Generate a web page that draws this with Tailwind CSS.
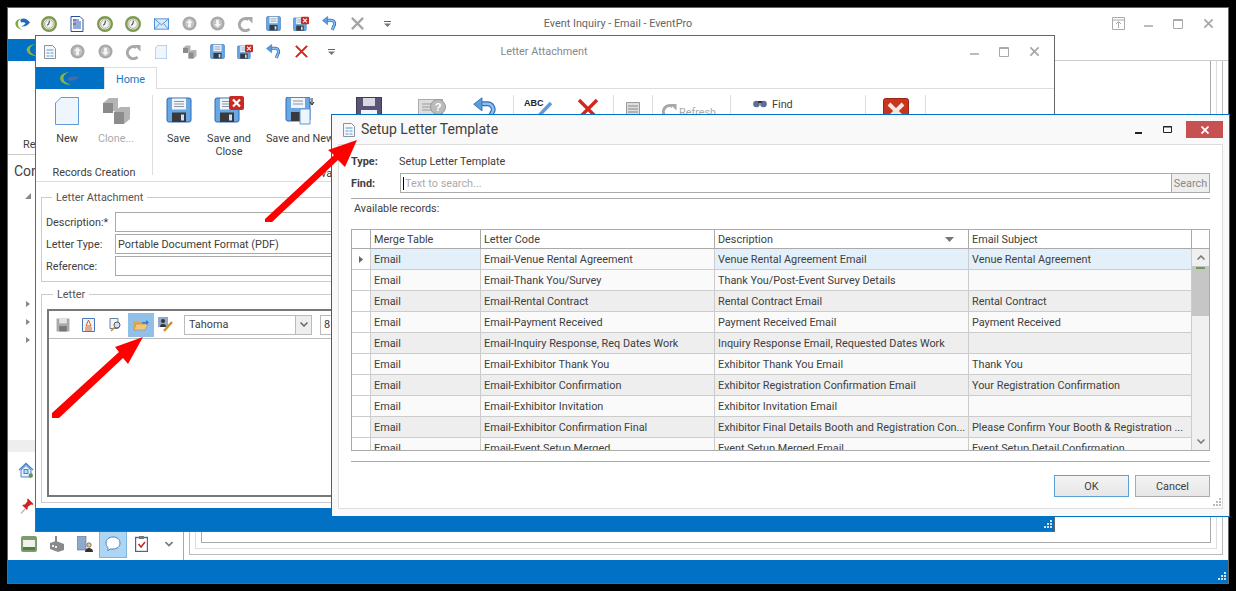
<!DOCTYPE html>
<html>
<head>
<meta charset="utf-8">
<script src="https://cdn.jsdelivr.net/npm/@tailwindcss/browser@4"></script>
</head>
<body class="m-0 overflow-hidden bg-black">
<svg class="hidden" xmlns="http://www.w3.org/2000/svg">
  <symbol id="clock" viewBox="0 0 16 16"><circle cx="8" cy="8" r="6.800" fill="#e8ecdc" stroke="#7f9a50" stroke-width="2.400"/><circle cx="8" cy="8" r="4.300" fill="#f2f2f2" stroke="#8a8a80" stroke-width=".6"/><path d="M8.500 4.800 7.600 8.400 6 9.200" fill="none" stroke="#333" stroke-width="1"/></symbol>
  <symbol id="doc" viewBox="0 0 14 16"><path d="M1 .5h9l3 3v12H1z" fill="#fff" stroke="#2a4f9a"/><path d="M3 4h6M3 6h8M3 8h8M3 10h8M3 12h8" stroke="#2458b8"/><path d="M3 4h3M3 8h3" stroke="#c03030"/></symbol>
  <symbol id="mail" viewBox="0 0 16 12"><rect x=".5" y=".5" width="15" height="11" fill="#dbeafa" stroke="#4d8fd0"/><path d="M.5 .5 8 7l7.500-6.500M.5 11.500 6 5.500M15.500 11.500 10 5.500" fill="none" stroke="#4d8fd0"/></symbol>
  <symbol id="up" viewBox="0 0 16 16"><circle cx="8" cy="8" r="7.500" fill="#a9a9a9"/><circle cx="8" cy="8" r="5" fill="#c4c4c4"/><path d="M8 3.500 11.500 7.500H9.500V12h-3V7.500h-2z" fill="#f4f4f4"/></symbol>
  <symbol id="down" viewBox="0 0 16 16"><circle cx="8" cy="8" r="7.500" fill="#a9a9a9"/><circle cx="8" cy="8" r="5" fill="#c4c4c4"/><path d="M8 12.500 11.500 8.500H9.500V4h-3v4.500h-2z" fill="#f4f4f4"/></symbol>
  <symbol id="refresh" viewBox="0 0 16 16"><path d="M12.500 13A6 6 0 1 1 11.500 3.500" fill="none" stroke="#a8a8a8" stroke-width="3"/><path d="M9 1h6.500v6.500z" fill="#a8a8a8"/></symbol>
  <symbol id="disk" viewBox="0 0 26 26"><path d="M1 3a2 2 0 0 1 2-2h20a2 2 0 0 1 2 2v20a2 2 0 0 1-2 2H3a2 2 0 0 1-2-2z" fill="#6aa8e4" stroke="#2a68b0"/><rect x="6" y="1.500" width="14" height="11" fill="#f1f4f8"/><path d="M8 4.500h10M8 7h10M8 9.500h10" stroke="#8a95a3"/><rect x="6" y="15.500" width="14" height="9.500" fill="#3a3a3e"/><rect x="15" y="17.500" width="3" height="6" fill="#cfe0f2"/></symbol>
  <symbol id="diskx" viewBox="0 0 30 27"><use href="#disk" x="0" y="1" width="26" height="26"/><rect x="15" y="0" width="15" height="14" rx="2" fill="#c62a20"/><path d="M19 3.500l7 7M26 3.500l-7 7" stroke="#fff" stroke-width="2.200"/></symbol>
  <symbol id="undo" viewBox="0 0 16 16"><path d="M4 4.500H9.500a3.800 3.800 0 0 1 3 6.300L11 15" fill="none" stroke="#2f6fb8" stroke-width="3.200"/><path d="M4 4.500H9.500a3.800 3.800 0 0 1 3 6.300L11 15" fill="none" stroke="#8cc0f0" stroke-width="1.600"/><path d="M6 .5v8.800L.5 4.800z" fill="#5c9cdc" stroke="#2f6fb8" stroke-width=".6"/></symbol>
  <symbol id="xgray" viewBox="0 0 16 16"><path d="M2 2l12 12M14 2 2 14" stroke="#a5a5a5" stroke-width="2.400"/></symbol>
  <symbol id="xred" viewBox="0 0 16 16"><path d="M2 2l12 12M14 2 2 14" stroke="#d3261c" stroke-width="2.200"/></symbol>
  <symbol id="drop" viewBox="0 0 7 6"><path d="M0 .5h7" stroke="#666"/><path d="M0 2.500h7L3.500 6z" fill="#777"/></symbol>
  <symbol id="newdoc" viewBox="0 0 24 28"><path d="M6 .5h17.500v27H.5V6z" fill="#eef5fc" stroke="#5c9ad8"/></symbol>
  <symbol id="clone" viewBox="0 0 30 28"><path d="M2 6l6-5h9v13H2z" fill="#b4b4b4"/><path d="M13 15l6-5h10v12l-6 5H13z" fill="#b4b4b4"/><path d="M13 15h10v12H13z" fill="#8c8c8c"/><path d="M2 6h10v10H2z" fill="#8a8a8a"/></symbol>
  <symbol id="list" viewBox="0 0 12 14"><path d="M.5 .5h8l3 3v10H.5z" fill="#f6f8fb" stroke="#8a929c"/><path d="M2.500 4h7v2h-7zM2.500 7h3v2h-3zM6.500 7h3v2h-3zM2.500 10h3v2h-3zM6.500 10h3v2h-3z" fill="#a8c8e8"/></symbol>
  <symbol id="logo" viewBox="0 0 16 14"><path d="M7 1.500C2.500 2.500 1 5 1.500 7.500 2 10.500 5 12 8.500 13 5 11 3.800 9 4 6.500 4.100 4.500 5 3 7 1.500z" fill="#7fa83c"/><path d="M7 2c3-1.200 6-.5 9 3.500-2 2.500-5 4.500-9 4 2.500-.7 4-2 4.500-3.500-1-.7-2.500-1-4.500-.5-.6-1.500-.6-2.500 0-3.500z" fill="#1b6cc0"/></symbol>
  <symbol id="logob" viewBox="0 0 22 16"><path d="M10 1C3 2 0 5 .5 8.500 1 12 5 14.500 12 15 7 13 4 11 4 7.500 4 5 6 2.500 10 1z" fill="#8fb33c"/><path d="M9 7c3-1 7-1.500 12-1-2 2-5 4-8 4.500-1 .1-3 0-4-1z" fill="#4a6aa8"/></symbol>
  <symbol id="grip" viewBox="0 0 9 9"><path d="M7 0h2v2H7zM4 3h2v2H4zM7 3h2v2H7zM1 6h2v2H1zM4 6h2v2H4zM7 6h2v2H7z" fill="currentColor"/></symbol>
</svg>

<!-- Main window -->
<div class="absolute left-[7px] top-[7px] flex h-[577px] w-[1222px] flex-col border border-[#666] bg-white font-['Roboto',sans-serif] text-[10.85px] leading-[13px] text-[#404040]">
  <div class="relative flex h-[31px] shrink-0 items-center">
    <div class="flex w-[27px] justify-center"><svg class="h-[14px] w-[16px]"><use href="#logo"/></svg></div>
    <div class="flex w-[28px] justify-center"><svg class="size-[16px]"><use href="#clock"/></svg></div>
    <div class="flex w-[28px] justify-center"><svg class="h-[16px] w-[14px]"><use href="#doc"/></svg></div>
    <div class="flex w-[28px] justify-center"><svg class="size-[16px]"><use href="#clock"/></svg></div>
    <div class="flex w-[28px] justify-center"><svg class="size-[16px]"><use href="#clock"/></svg></div>
    <div class="flex w-[28px] justify-center"><svg class="h-[12px] w-[15px]"><use href="#mail"/></svg></div>
    <div class="flex w-[28px] justify-center"><svg class="size-[15px]"><use href="#up"/></svg></div>
    <div class="flex w-[28px] justify-center"><svg class="size-[15px]"><use href="#down"/></svg></div>
    <div class="flex w-[28px] justify-center"><svg class="size-[16px]"><use href="#refresh"/></svg></div>
    <div class="flex w-[28px] justify-center"><svg class="size-[15px]"><use href="#disk"/></svg></div>
    <div class="flex w-[28px] justify-center"><svg class="h-[16px] w-[16px]"><use href="#diskx"/></svg></div>
    <div class="flex w-[28px] justify-center"><svg class="size-[15px]"><use href="#undo"/></svg></div>
    <div class="flex w-[28px] justify-center"><svg class="size-[15px]"><use href="#xgray"/></svg></div>
    <div class="flex w-[32px] justify-center"><svg class="h-[6px] w-[7px]"><use href="#drop"/></svg></div>
    <div class="absolute left-[400px] w-[420px] text-center text-[#666]">Event Inquiry - Email - EventPro</div>
    <div class="ml-auto flex items-center">
      <div class="flex w-[30px] justify-center"><svg class="size-[13px]" viewBox="0 0 13 13"><path d="M.5 .5h12v12H.5zM.5 3h12M6.500 11V5M4 7l2.500-2.500L9 7" fill="none" stroke="#aaa"/></svg></div>
      <div class="flex w-[30px] justify-center"><svg class="h-[13px] w-[9px]" viewBox="0 0 9 13"><path d="M0 9h9" stroke="#bbb" stroke-width="2"/></svg></div>
      <div class="flex w-[30px] justify-center"><svg class="size-[10px]" viewBox="0 0 10 10"><path d="M.5 .5h9v9h-9zM.5 1.500h9" fill="none" stroke="#aaa"/></svg></div>
      <div class="flex w-[30px] justify-center"><svg class="size-[11px]"><use href="#xgray"/></svg></div>
      <div class="w-[5px]"></div>
    </div>
  </div>
  <div class="flex h-[22px] shrink-0 border-b border-[#ccc]">
    <div class="flex h-[22px] w-[68px] items-center justify-end bg-[#0071c5] pr-[30px]"><svg class="h-[14px] w-[20px]"><use href="#logob"/></svg></div>
  </div>
  <div class="flex min-h-0 flex-1">
    <div class="flex w-[176px] shrink-0 flex-col border-r border-[#aaa]">
      <div class="mt-[77px] pl-[15px]">Re</div>
      <div class="mt-[3px] border-b border-[#ccc]"></div>
      <div class="mt-[7px] pl-[6px] text-[14px] leading-[18px]">Con</div>
      <div class="mt-[13px] pl-[17px]"><svg class="size-[6px]" viewBox="0 0 6 6"><path d="M6 0v6H0z" fill="#888"/></svg></div>
      <div class="mt-[102px] flex flex-col gap-[12px] pl-[18px]">
        <svg class="h-[6px] w-[4px]" viewBox="0 0 4 6"><path d="M0 0l4 3-4 3z" fill="#888"/></svg>
        <svg class="h-[6px] w-[4px]" viewBox="0 0 4 6"><path d="M0 0l4 3-4 3z" fill="#888"/></svg>
        <svg class="h-[6px] w-[4px]" viewBox="0 0 4 6"><path d="M0 0l4 3-4 3z" fill="#888"/></svg>
      </div>
      <div class="mt-[97px] h-[12px] bg-[#eee]"></div>
      <div class="mt-[10px] pl-[10px]"><svg class="h-[16px] w-[16px]" viewBox="0 0 16 16"><path d="M8 .5 .5 7.500l1 1L8 2.800l6.500 5.700 1-1z" fill="#4d86cc"/><path d="M3 8v7h10V8L8 3.500z" fill="#e8f0f8" stroke="#4d86cc"/><rect x="6" y="7.500" width="4" height="4" fill="#bcd4ee" stroke="#4d86cc"/><circle cx="12.800" cy="13.500" r="2.200" fill="#5a9a50"/></svg></div>
      <div class="mt-[20px] pl-[12px]"><svg class="h-[16px] w-[14px]" viewBox="0 0 14 16"><path d="M5 11 1 15.500" stroke="#b5b5b5" stroke-width="1.200"/><path d="M8 .5c-1 .5-1 1.500-.5 2.500L5 6.500c-1-.3-2 0-2.800.8L7 12c.8-.8 1-2 .6-3l3.400-2.500c1 .5 2 .5 2.500-.5z" fill="#d4211d"/></svg></div>
      <div class="mb-[2px] mt-auto flex h-[28px] items-center pl-[7px]">
        <div class="flex w-[28px] justify-center"><svg class="size-[16px]" viewBox="0 0 16 16"><rect width="16" height="16" rx="2" fill="#7e9a6e"/><rect x="2" y="4" width="12" height="7" fill="#eef2ea"/><rect x="2" y="11" width="12" height="3" fill="#4f7f40"/></svg></div>
        <div class="flex w-[28px] justify-center"><svg class="size-[16px]" viewBox="0 0 16 16"><path d="M6 0h2v6H6z" fill="#888"/><path d="M1 7l6-2 8 3v6l-6 2-8-3z" fill="#8a8a8a"/><path d="M3 9h2v2H3zM6 10h2v2H6z" fill="#eee"/></svg></div>
        <div class="flex w-[28px] justify-center"><svg class="size-[16px]" viewBox="0 0 16 16"><path d="M0 0h9v14H0z" fill="#8ea9cc" stroke="#5a6f90" stroke-width=".6"/><circle cx="12" cy="9" r="2.200" fill="#e8c8a0" stroke="#333" stroke-width=".6"/><path d="M8 16c0-3 2-4 4-4s4 1 4 4z" fill="#333"/></svg></div>
        <div class="flex h-[28px] w-[28px] items-center justify-center border border-[#7db4e0] bg-[#aed5f2]"><svg class="size-[16px]" viewBox="0 0 16 16"><path d="M8 1c4 0 7 2.500 7 6s-3 6-7 6H5l-2 2V11.500C1.700 10.500 1 9 1 7c0-3.500 3-6 7-6z" fill="#fff" stroke="#4f7fc0"/></svg></div>
        <div class="flex w-[28px] justify-center"><svg class="h-[16px] w-[13px]" viewBox="0 0 13 16"><rect x=".5" y="1.500" width="12" height="14" fill="#fff" stroke="#3a68a8" stroke-width="1.400"/><rect x="4" y="0" width="5" height="3" fill="#777"/><path d="M3.500 8l2.500 3 4-5" fill="none" stroke="#c82a20" stroke-width="1.600"/></svg></div>
        <div class="flex w-[27px] justify-center"><svg class="h-[6px] w-[8px]" viewBox="0 0 8 6"><path d="M.5 1 4 4.500 7.500 1" fill="none" stroke="#777" stroke-width="1.600"/></svg></div>
      </div>
    </div>
    <div class="flex min-w-0 flex-1 pb-[5px] pl-[5px] pr-[5px]">
      <div class="flex flex-1 border border-t-0 border-[#bbb] px-[5px] pb-[5px]">
        <div class="flex flex-1 border border-t-0 border-[#ddd] px-[5px] pb-[5px]">
          <div class="flex-1 border border-t-0 border-[#aaa]"></div>
        </div>
      </div>
    </div>
  </div>
  <div class="flex h-[23px] shrink-0 items-end justify-end bg-[#0071c5] pb-[2px] pr-[2px] text-[#cfe3f5]"><svg class="size-[9px]"><use href="#grip"/></svg></div>
</div>

<!-- Letter Attachment window -->
<div class="absolute left-[35px] top-[35px] flex h-[497px] w-[1020px] flex-col border border-[#666] bg-white font-['Roboto',sans-serif] text-[10.85px] leading-[13px] text-[#404040]">
  <div class="relative flex h-[31px] shrink-0 items-center">
    <div class="flex w-[27px] justify-center"><svg class="h-[14px] w-[12px]"><use href="#list"/></svg></div>
    <div class="flex w-[28px] justify-center"><svg class="size-[15px]"><use href="#up"/></svg></div>
    <div class="flex w-[28px] justify-center"><svg class="size-[15px]"><use href="#down"/></svg></div>
    <div class="flex w-[28px] justify-center"><svg class="size-[16px]"><use href="#refresh"/></svg></div>
    <div class="flex w-[28px] justify-center"><svg class="h-[14px] w-[12px]"><use href="#newdoc"/></svg></div>
    <div class="flex w-[28px] justify-center"><svg class="h-[14px] w-[15px]"><use href="#clone"/></svg></div>
    <div class="flex w-[28px] justify-center"><svg class="size-[15px]"><use href="#disk"/></svg></div>
    <div class="flex w-[28px] justify-center"><svg class="h-[16px] w-[16px]"><use href="#diskx"/></svg></div>
    <div class="flex w-[28px] justify-center"><svg class="size-[15px]"><use href="#undo"/></svg></div>
    <div class="flex w-[28px] justify-center"><svg class="size-[15px]"><use href="#xred"/></svg></div>
    <div class="flex w-[32px] justify-center"><svg class="h-[6px] w-[7px]"><use href="#drop"/></svg></div>
    <div class="absolute left-[408px] w-[200px] text-center text-[#888]">Letter Attachment</div>
    <div class="ml-auto flex items-center pr-[5px]">
      <div class="flex w-[30px] justify-center"><svg class="h-[13px] w-[9px]" viewBox="0 0 9 13"><path d="M0 9h9" stroke="#bbb" stroke-width="2"/></svg></div>
      <div class="flex w-[30px] justify-center"><svg class="size-[10px]" viewBox="0 0 10 10"><path d="M.5 .5h9v9h-9zM.5 1.500h9" fill="none" stroke="#aaa"/></svg></div>
      <div class="flex w-[30px] justify-center"><svg class="size-[11px]"><use href="#xgray"/></svg></div>
    </div>
  </div>
  <div class="flex h-[22px] shrink-0 border-b border-[#ddd]">
    <div class="flex h-[22px] w-[68px] items-center justify-center bg-[#0071c5]"><svg class="h-[15px] w-[22px]"><use href="#logob"/></svg></div>
    <div class="z-10 flex h-[22px] w-[53px] items-center justify-center border border-b-0 border-[#ddd] bg-white pt-px text-[#1877c9]">Home</div>
  </div>
  <div class="flex h-[93px] shrink-0 border-b border-[#ddd]">
    <div class="flex h-[90px] w-[116px] flex-col items-center pt-[8px]">
      <div class="ml-[11px] flex gap-[9px] self-start">
        <div class="flex w-[40px] flex-col items-center"><svg class="h-[28px] w-[24px]"><use href="#newdoc"/></svg><div class="mt-[7px]">New</div></div>
        <div class="flex w-[40px] flex-col items-center text-[#aaa]"><svg class="h-[28px] w-[30px]"><use href="#clone"/></svg><div class="mt-[7px]">Clone...</div></div>
      </div>
      <div class="mt-auto">Records Creation</div>
    </div>
    <div class="mt-[6px] h-[80px] w-px bg-[#ddd]"></div>
    <div class="relative flex h-[86px] pt-[8px]">
      <div class="flex w-[51px] flex-col items-center"><svg class="size-[26px]"><use href="#disk"/></svg><div class="mt-[9px]">Save</div></div>
      <div class="flex w-[50px] flex-col items-center text-center"><svg class="-mt-[1px] h-[27px] w-[30px]"><use href="#diskx"/></svg><div class="mt-[9px]">Save and<br>Close</div></div>
      <div class="flex w-[92px] flex-col items-center"><svg class="h-[28px] w-[30px]" viewBox="0 0 30 28"><rect x="1" y="0" width="24" height="24" rx="2" fill="#6aa8e4" stroke="#2a68b0"/><rect x="6" y="1" width="14" height="10" fill="#f1f4f8"/><path d="M8 4h10M8 7h10" stroke="#8a95a3"/><rect x="6" y="15" width="12" height="9" fill="#3a3a3e"/><path d="M15 12h10v15H15z" fill="#eef5fc" stroke="#5c9ad8"/><path d="M27 1v6M25 5l2 3 2-3" stroke="#222" fill="none"/></svg><div class="mt-[7px] whitespace-nowrap">Save and New</div></div>
      <div class="flex w-[46px] flex-col items-center"><svg class="size-[26px]" viewBox="0 0 26 26"><rect x=".5" y=".5" width="25" height="25" fill="#5a5478" stroke="#3e3a58"/><rect x="7" y="1" width="12" height="8" fill="#d8d8e0"/><rect x="5" y="13" width="16" height="12" fill="#f4f4f6"/></svg></div>
      <div class="flex w-[80px] flex-col items-center"><svg class="h-[24px] w-[28px]" viewBox="0 0 28 24"><rect x=".5" y="2.500" width="24" height="17" fill="#ddd" stroke="#aaa"/><path d="M4 7h9M4 10h9M4 13h9" stroke="#999"/><circle cx="20" cy="10" r="7.500" fill="#bbb" stroke="#999"/><text x="20" y="14" font-size="11" font-weight="700" text-anchor="middle" fill="#fff" font-family="Liberation Sans">?</text></svg></div>
      <div class="flex w-[26px] flex-col items-center"><svg class="size-[24px]"><use href="#undo"/></svg></div>
      <div class="w-[15px]"></div>
      <div class="-mt-[2px] h-[80px] w-px bg-[#ddd]"></div>
      <div class="flex w-[48px] flex-col items-center"><svg class="h-[28px] w-[30px]" viewBox="0 0 30 28"><text x="1" y="9" font-size="9" font-weight="700" fill="#223" font-family="Liberation Sans">ABC</text><path d="M4 18l6 7L28 6" fill="none" stroke="#5f9bdc" stroke-width="3.500"/></svg></div>
      <div class="flex w-[51px] flex-col items-center"><svg class="size-[24px]"><use href="#xred"/></svg></div>
      <div class="-mt-[2px] h-[80px] w-px bg-[#ddd]"></div>
      <div class="flex w-[38px] flex-col items-center pt-[5px]"><svg class="h-[16px] w-[14px]" viewBox="0 0 14 16"><path d="M.5 .5h13v15H.5z" fill="#ddd" stroke="#999"/><path d="M2 4h10M2 7h10M2 10h10M2 13h10" stroke="#888"/></svg></div>
      <div class="-mt-[2px] h-[80px] w-px bg-[#ddd]"></div>
      <div class="flex w-[77px] items-start gap-[2px] pl-[8px] pt-[6px] text-[#aaa]"><svg class="size-[16px]"><use href="#refresh"/></svg><span class="pt-[3px]">Refresh</span></div>
      <div class="-mt-[2px] h-[80px] w-px bg-[#ddd]"></div>
      <div class="flex w-[134px] items-start gap-[5px] pl-[22px] pt-[1px]"><svg class="mt-[1px] h-[9px] w-[14px]" viewBox="0 0 14 9"><circle cx="3.500" cy="5" r="3.300" fill="#5a6f9a"/><circle cx="10.500" cy="5" r="3.300" fill="#5a6f9a"/><path d="M5 2h4v2H5z" fill="#333"/></svg><span>Find</span></div>
      <div class="-mt-[2px] h-[80px] w-px bg-[#ddd]"></div>
      <div class="flex w-[59px] flex-col items-center pt-[1px]"><svg class="size-[26px]" viewBox="0 0 26 26"><rect x=".5" y=".5" width="25" height="25" rx="2" fill="#c8351f" stroke="#9c2415"/><path d="M6 6l14 14M20 6 6 20" stroke="#f6e8dc" stroke-width="4"/></svg></div>
      <div class="-mt-[2px] h-[80px] w-px bg-[#ddd]"></div>
      <div class="absolute left-[168px] top-[78px]">va</div>
    </div>
  </div>
  <div class="flex min-h-0 flex-1 flex-col px-[5px] pt-[9px]">
    <fieldset class="h-[91px] shrink-0 border border-[#ccc] pl-[4px]">
      <legend class="ml-[6px] px-[4px] text-[#555]">Letter Attachment</legend>
      <div class="mt-[8px] flex flex-col gap-[2px]">
        <div class="flex h-[20px] items-center"><div class="w-[69px]">Description:*</div><div class="h-[20px] flex-1 border border-[#aaa]"></div></div>
        <div class="flex h-[20px] items-center"><div class="w-[69px]">Letter Type:</div><div class="flex h-[20px] flex-1 items-center border border-[#aaa] pl-[2px]">Portable Document Format (PDF)</div></div>
        <div class="flex h-[20px] items-center"><div class="w-[69px]">Reference:</div><div class="h-[20px] flex-1 border border-[#aaa]"></div></div>
      </div>
    </fieldset>
    <fieldset class="mt-[6px] flex h-[215px] shrink-0 flex-col border border-[#ccc] px-[5px] pb-[5px]">
      <legend class="ml-[6px] px-[4px] text-[#555]">Letter</legend>
      <div class="mt-[8px] flex h-[188px] flex-col border-2 border-[#777]">
        <div class="flex h-[28px] shrink-0 items-center border-b border-[#bbb] pl-[7px]">
          <svg class="size-[14px]" viewBox="0 0 26 26"><rect x="1" y="1" width="24" height="24" fill="#aaa"/><rect x="6" y="1" width="14" height="9" fill="#e4e4e4"/><rect x="6" y="15" width="14" height="10" fill="#777"/></svg>
          <svg class="ml-[12px] h-[14px] w-[13px]" viewBox="0 0 13 14"><path d="M.5 .5h12v13H.5z" fill="#f0f5fb" stroke="#4a78b8"/><path d="M6.500 2 4 8h5zM3 10h7M3 12h7" fill="none" stroke="#d06020"/></svg>
          <svg class="ml-[14px] size-[14px]" viewBox="0 0 14 14"><path d="M1 .5h8v10H1z" fill="#f4f4f4" stroke="#6a80a0"/><circle cx="8" cy="7" r="3" fill="#cfe3f5" stroke="#555"/><path d="M6 9l-4 4" stroke="#c89030" stroke-width="1.600"/></svg>
          <div class="ml-[5px] flex h-[24px] w-[26px] items-center justify-center bg-[#90bfe8]"><svg class="h-[12px] w-[16px]" viewBox="0 0 16 12"><path d="M0 2h5l1 1h5v8H0z" fill="#e0a850"/><path d="M1 11 3 5h12l-3 6z" fill="#f0c878" stroke="#b88030" stroke-width=".5"/><path d="M9 3h4V1l3 2.500L13 6V4.500H9z" fill="#3a78c8"/></svg></div>
          <svg class="ml-[4px] size-[15px]" viewBox="0 0 15 15"><path d="M0 0h10v10H0z" fill="#8ea9cc"/><circle cx="5" cy="4" r="2" fill="#333"/><path d="M2 10c0-2 1-3 3-3s3 1 3 3z" fill="#333"/><path d="M14 5 6 14" stroke="#d09030" stroke-width="2.500"/></svg>
          <div class="ml-[11px] flex h-[20px] w-[128px] items-center border border-[#bbb] pl-[4px]">Tahoma<div class="ml-auto flex h-full w-[16px] items-center justify-center border-l border-[#bbb] bg-[#eee]"><svg class="h-[5px] w-[8px]" viewBox="0 0 8 5"><path d="M.5 .5 4 4 7.500 .5" fill="none" stroke="#666" stroke-width="1.500"/></svg></div></div>
          <div class="ml-[8px] flex h-[20px] w-[40px] items-center border border-[#bbb] pl-[3px]">8</div>
        </div>
      </div>
    </fieldset>
  </div>
  <div class="flex h-[23px] shrink-0 items-end justify-end bg-[#0071c5] pb-[2px] pr-[2px] text-[#cfe3f5]"><svg class="size-[9px]"><use href="#grip"/></svg></div>
</div>

<!-- Setup Letter Template dialog -->
<div class="absolute left-[331px] top-[114px] flex h-[403px] w-[899px] flex-col border border-[#0072c6] bg-[#f9f9f9] font-['Roboto',sans-serif] text-[10.85px] leading-[13px] text-[#404040]">
  <div class="flex h-[29px] shrink-0 items-center pl-[11px]">
    <svg class="h-[14px] w-[12px]"><use href="#list"/></svg>
    <div class="ml-[6px] text-[14px] text-[#404040]">Setup Letter Template</div>
    <div class="ml-auto flex h-[17px] items-center self-start mt-[6px] pr-[6px]">
      <svg class="mr-[21px] mt-[6px] h-[2px] w-[7px]" viewBox="0 0 7 2"><rect width="7" height="2" fill="#222"/></svg>
      <svg class="mr-[10px] h-[7px] w-[9px]" viewBox="0 0 9 7"><path d="M.5 .5h8v6h-8z" fill="none" stroke="#222"/><path d="M0 1h9" stroke="#222"/></svg>
      <div class="ml-[4px] flex h-[17px] w-[37px] items-center justify-center bg-[#c75050]"><svg class="size-[8px]" viewBox="0 0 8 8"><path d="M.5 .5l7 7M7.500 .5l-7 7" stroke="#fff" stroke-width="1.800"/></svg></div>
    </div>
  </div>
  <div class="relative ml-[6px] mr-[6px] flex min-h-0 flex-1 flex-col border border-[#ddd] bg-white px-[12px] mb-[7px]">
    <div class="mt-[9px] flex h-[14px] items-center"><b class="w-[48px] font-bold">Type:</b><span>Setup Letter Template</span></div>
    <div class="mt-[5px] flex h-[20px]"><b class="flex w-[49px] items-center font-bold">Find:</b>
      <div class="flex flex-1 items-center border border-[#aaa] pl-[2px] text-[#aaa]"><span class="mr-px h-[13px] w-px bg-black"></span>Text to search...</div>
      <div class="flex w-[38px] items-center justify-center border border-l-0 border-[#aaa] bg-[#eee] text-[#888]">Search</div>
    </div>
    <div class="mt-[5px] border-b border-[#aaa]"></div>
    <div class="mt-[3px] pl-[3px]">Available records:</div>
    <div class="mt-[14px] flex h-[222px] shrink-0 overflow-hidden border border-[#aaa]">
      <div class="grid w-[840px] shrink-0 auto-rows-[21px] grid-cols-[19px_110px_234px_254px_223px] grid-rows-[19px] content-start [&>div]:truncate [&>div]:border-r [&>div]:border-b [&>div]:border-[#ccc] [&>div]:pl-[3px] [&>div]:leading-[21px]">
        <div class="!border-[#aaa]"></div><div class="!border-[#aaa] !leading-[19px]">Merge Table</div><div class="!border-[#aaa] !leading-[19px]">Letter Code</div><div class="relative !border-[#aaa] !leading-[19px]">Description<svg class="absolute right-[14px] top-[7px] h-[5px] w-[9px]" viewBox="0 0 9 5"><path d="M0 0h9L4.500 5z" fill="#777"/></svg></div><div class="!border-[#aaa] !leading-[19px]">Email Subject</div>

        <div class="relative bg-white"><svg class="absolute left-[7px] top-[7px] h-[7px] w-[4px]" viewBox="0 0 4 7"><path d="M0 0l4 3.500L0 7z" fill="#666"/></svg></div><div class="bg-[#e3f0fa]">Email</div><div class="bg-[#fafafa]">Email-Venue Rental Agreement</div><div class="bg-[#e3f0fa]">Venue Rental Agreement Email</div><div class="bg-[#e3f0fa]">Venue Rental Agreement</div>

        <div class="bg-white"></div><div class="bg-[#fafafa]">Email</div><div class="bg-[#fafafa]">Email-Thank You/Survey</div><div class="bg-[#fafafa]">Thank You/Post-Event Survey Details</div><div class="bg-[#fafafa]"></div>

        <div class="bg-white"></div><div class="bg-[#eee]">Email</div><div class="bg-[#eee]">Email-Rental Contract</div><div class="bg-[#eee]">Rental Contract Email</div><div class="bg-[#eee]">Rental Contract</div>

        <div class="bg-white"></div><div class="bg-[#fafafa]">Email</div><div class="bg-[#fafafa]">Email-Payment Received</div><div class="bg-[#fafafa]">Payment Received Email</div><div class="bg-[#fafafa]">Payment Received</div>

        <div class="bg-white"></div><div class="bg-[#eee]">Email</div><div class="bg-[#eee]">Email-Inquiry Response, Req Dates Work</div><div class="bg-[#eee]">Inquiry Response Email, Requested Dates Work</div><div class="bg-[#eee]"></div>

        <div class="bg-white"></div><div class="bg-[#fafafa]">Email</div><div class="bg-[#fafafa]">Email-Exhibitor Thank You</div><div class="bg-[#fafafa]">Exhibitor Thank You Email</div><div class="bg-[#fafafa]">Thank You</div>

        <div class="bg-white"></div><div class="bg-[#eee]">Email</div><div class="bg-[#eee]">Email-Exhibitor Confirmation</div><div class="bg-[#eee]">Exhibitor Registration Confirmation Email</div><div class="bg-[#eee]">Your Registration Confirmation</div>

        <div class="bg-white"></div><div class="bg-[#fafafa]">Email</div><div class="bg-[#fafafa]">Email-Exhibitor Invitation</div><div class="bg-[#fafafa]">Exhibitor Invitation Email</div><div class="bg-[#fafafa]"></div>

        <div class="bg-white"></div><div class="bg-[#eee]">Email</div><div class="bg-[#eee]">Email-Exhibitor Confirmation Final</div><div class="bg-[#eee]">Exhibitor Final Details Booth and Registration Con...</div><div class="bg-[#eee]">Please Confirm Your Booth &amp; Registration ...</div>

        <div class="bg-white"></div><div class="bg-[#fafafa]">Email</div><div class="bg-[#fafafa]">Email-Event Setup Merged</div><div class="bg-[#fafafa]">Event Setup Merged Email</div><div class="bg-[#fafafa]">Event Setup Detail Confirmation</div>
      </div>
      <div class="flex min-w-0 flex-1 flex-col">
        <div class="h-[19px] shrink-0 border-b border-[#aaa]"></div>
        <div class="flex h-[17px] shrink-0 items-center justify-center bg-[#f0f0f0]"><svg class="h-[5px] w-[8px]" viewBox="0 0 8 5"><path d="M.5 4.500 4 1l3.500 3.500" fill="none" stroke="#777" stroke-width="1.500"/></svg></div>
        <div class="relative h-[50px] shrink-0 bg-[#c6c6c6]"><div class="mx-auto mt-[1px] h-[2px] w-[9px] bg-[#6f9a50]"></div></div>
        <div class="flex flex-1 items-end justify-center bg-[#f0f0f0] pb-[6px]"><svg class="h-[5px] w-[8px]" viewBox="0 0 8 5"><path d="M.5 .5 4 4 7.500 .5" fill="none" stroke="#777" stroke-width="1.500"/></svg></div>
      </div>
    </div>
    <div class="mt-[10px] border-b border-[#aaa]"></div>
    <div class="mt-[13px] flex justify-end gap-[6px]">
      <div class="flex h-[22px] w-[75px] items-center justify-center border border-[#5a9fd8] bg-gradient-to-b from-[#f4f4f4] to-[#e6e6e6]">OK</div>
      <div class="flex h-[22px] w-[75px] items-center justify-center border border-[#aaa] bg-gradient-to-b from-[#f4f4f4] to-[#e6e6e6]">Cancel</div>
    </div>
    <div class="absolute bottom-[1px] right-[1px] text-[#bbb]"><svg class="size-[9px]"><use href="#grip"/></svg></div>
  </div>
</div>

<!-- Red annotation arrows -->
<svg class="absolute left-0 top-0 h-[591px] w-[1236px]" viewBox="0 0 1236 591">
  <path d="M52 413v5h7l64-60 5 6 15-27-28 10 4 5z" fill="#f00"/>
  <path d="M265 219v3h7l66-62 7 7 12-27-29 10 6 5z" fill="#f00"/>
</svg>
</body>
</html>
